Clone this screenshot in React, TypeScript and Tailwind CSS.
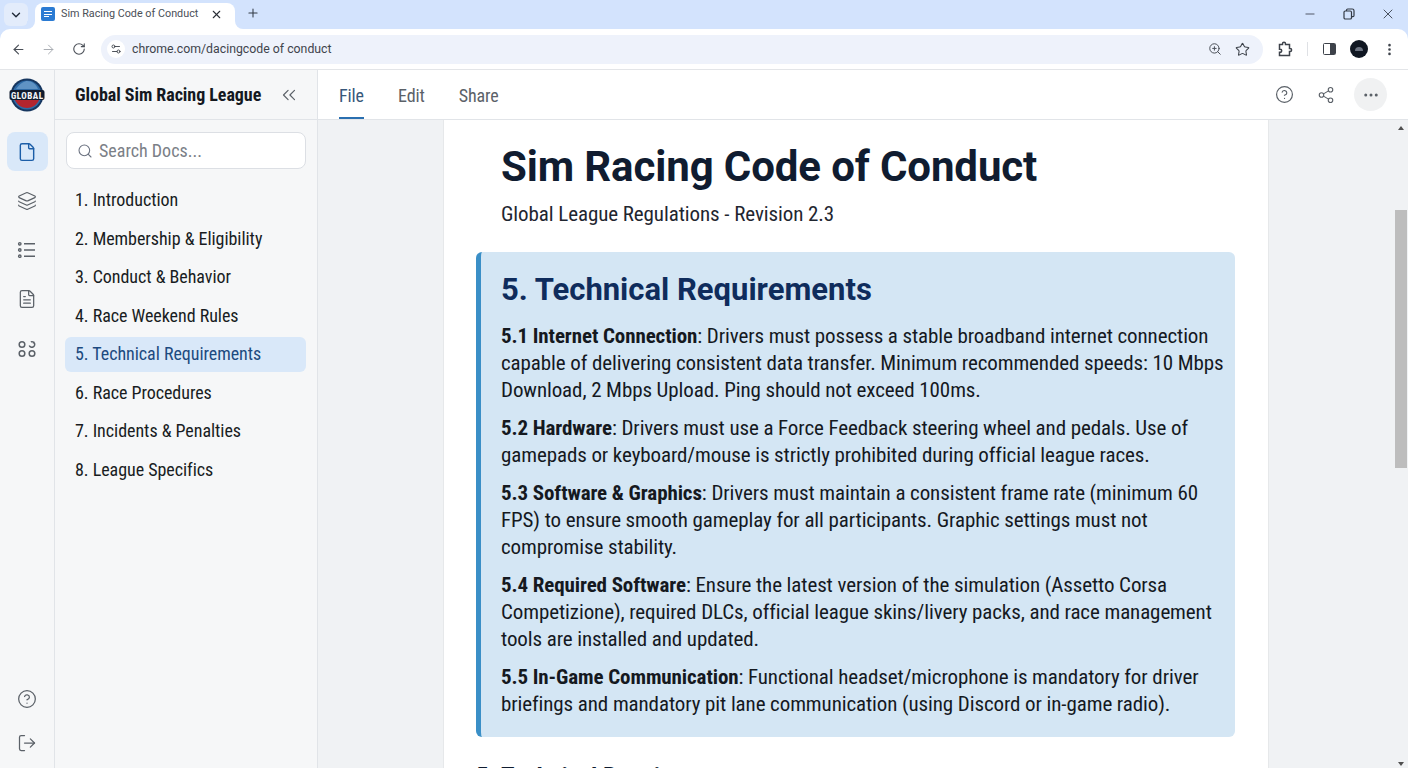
import React from 'react';
import {
  ArrowLeft,
  ArrowRight,
  ChevronDown,
  ChevronsLeft,
  CircleHelp,
  Ellipsis,
  EllipsisVertical,
  File,
  FileText,
  Layers,
  LogOut,
  Minus,
  Plus,
  RotateCw,
  Search,
  Settings2,
  Share2,
  Star,
  X,
  ZoomIn,
} from 'lucide-react';

const chapters = [
  '1. Introduction',
  '2. Membership & Eligibility',
  '3. Conduct & Behavior',
  '4. Race Weekend Rules',
  '5. Technical Requirements',
  '6. Race Procedures',
  '7. Incidents & Penalties',
  '8. League Specifics',
];

const sections = [
  {
    title: '5.1 Internet Connection',
    lines: [
      ': Drivers must possess a stable broadband internet connection',
      'capable of delivering consistent data transfer. Minimum recommended speeds: 10 Mbps',
      'Download, 2 Mbps Upload. Ping should not exceed 100ms.',
    ],
  },
  {
    title: '5.2 Hardware',
    lines: [
      ': Drivers must use a Force Feedback steering wheel and pedals. Use of',
      'gamepads or keyboard/mouse is strictly prohibited during official league races.',
    ],
  },
  {
    title: '5.3 Software & Graphics',
    lines: [
      ': Drivers must maintain a consistent frame rate (minimum 60',
      'FPS) to ensure smooth gameplay for all participants. Graphic settings must not',
      'compromise stability.',
    ],
  },
  {
    title: '5.4 Required Software',
    lines: [
      ': Ensure the latest version of the simulation (Assetto Corsa',
      'Competizione), required DLCs, official league skins/livery packs, and race management',
      'tools are installed and updated.',
    ],
  },
  {
    title: '5.5 In-Game Communication',
    lines: [
      ': Functional headset/microphone is mandatory for driver',
      'briefings and mandatory pit lane communication (using Discord or in-game radio).',
    ],
  },
];

function Logo() {
  return (
    <svg width="36" height="34" viewBox="0 0 36 34">
      <circle cx="18" cy="17" r="16.5" fill="#16365f" />
      <circle cx="18" cy="17" r="14.5" fill="#2d6aa6" />
      <path d="M7 11c4-6 9-8 11-8 5 0 9 3 11 8z" fill="#5f93c4" />
      <path d="M6 22h24c-2 5-7 8-12 8s-10-3-12-8z" fill="#b3252f" />
      <rect x="0.5" y="12" width="35" height="10" rx="2" fill="#111c2e" />
      <text x="18" y="20.500" textAnchor="middle" textLength="32" fontSize="9" fontWeight="800" fill="#f2f4f7" fontFamily="Roboto, sans-serif">
        GLOBAL
      </text>
    </svg>
  );
}

function AppsIcon() {
  return (
    <svg width="20" height="20" viewBox="0 0 20 20" fill="none" stroke="currentColor" strokeWidth="1.5" className="mt-[2px]">
      <circle cx="5" cy="5.500" r="2.800" />
      <path d="M12.300 6.500a2.800 2.800 0 1 0 1.500-3.600M16.500 4.500l.2-2" />
      <circle cx="5" cy="14.500" r="2.800" />
      <circle cx="15" cy="14.500" r="2.800" />
    </svg>
  );
}

function ListIcon() {
  return (
    <svg width="20" height="20" viewBox="0 0 20 20" fill="none" stroke="currentColor" strokeWidth="1.400">
      <circle cx="2.800" cy="3.800" r="1.200" />
      <circle cx="2.800" cy="10" r="1.200" />
      <circle cx="2.800" cy="16.200" r="1.200" />
      <path d="M7 3.800h11M7 10h11M7 16.200h11" />
    </svg>
  );
}

function TabBar() {
  return (
    <div className="flex h-[29px] items-end bg-[#d3e3fd] pl-1">
      <div className="mb-[3px] flex h-[23px] w-6 items-center justify-center rounded-md bg-[#e3ecfb] text-[#1f2937]">
        <ChevronDown size={14} strokeWidth={2.400} />
      </div>
      <div className="relative ml-[7px] flex h-[26px] w-[200px] items-center rounded-t-lg bg-white pb-[4px] pl-[6px] pr-3">
        {/* concave corners where the tab meets the toolbar */}
        <span className="absolute bottom-0 -left-[8px] h-2 w-2 bg-white">
          <span className="block h-full w-full rounded-br-lg bg-[#d3e3fd]" />
        </span>
        <span className="absolute bottom-0 -right-[8px] h-2 w-2 bg-white">
          <span className="block h-full w-full rounded-bl-lg bg-[#d3e3fd]" />
        </span>
        <div className="flex h-[14px] w-[14px] flex-col justify-center gap-[1.500px] rounded-[2px] bg-[#2b7bd3] px-[3px]">
          <span className="h-px w-full bg-white" />
          <span className="h-px w-full bg-white" />
          <span className="h-px w-[5px] bg-white" />
        </div>
        <span className="ml-[6px] text-[10.800px] text-[#4a4f57] [font-stretch:100%]">Sim Racing Code of Conduct</span>
        <X size={13} strokeWidth={2} className="ml-auto text-[#2b2f36]" />
      </div>
      <Plus size={14} strokeWidth={1.800} className="mb-[9px] ml-[11px] text-[#333a45]" />
      <div className="mb-[7px] ml-auto flex w-[105px] items-center justify-between pr-[12px] text-[#333a45]">
        <Minus size={14} strokeWidth={1.400} />
        <svg width="12" height="12" viewBox="0 0 12 12" fill="none" stroke="currentColor" strokeWidth="1.200">
          <rect x="1" y="3" width="7.500" height="8" rx="1.300" />
          <path d="M3.500 3V2.200C3.500 1.500 4 1 4.700 1h4.600C10.300 1 11 1.700 11 2.700v4.800c0 .7-.5 1.100-1.100 1.100h-1.400" />
        </svg>
        <X size={16} strokeWidth={1.300} />
      </div>
    </div>
  );
}

function ToolBar() {
  return (
    <div className="bg-[#d3e3fd]">
      <div className="flex h-[41px] items-center rounded-t-[10px] border-b border-[#e3e5e8] bg-white px-[11px]">
        <ArrowLeft size={15} strokeWidth={1.800} className="text-[#4a4f57]" />
        <ArrowRight size={15} strokeWidth={1.600} className="ml-[15px] text-[#a9adb3]" />
        <RotateCw size={14} strokeWidth={1.900} className="ml-[16px] text-[#4a4f57]" />
        <div className="ml-[15px] flex h-[29px] w-[1162px] items-center rounded-full bg-[#eef2fb] pl-[6px] pr-[13px]">
          <div className="flex h-[18px] w-[18px] items-center justify-center rounded-full bg-white text-[#3d424a]">
            <Settings2 size={12} strokeWidth={1.800} />
          </div>
          <span className="ml-[7px] pt-px text-[12.300px] text-[#3f444c] [font-stretch:100%]">chrome.com/dacingcode of conduct</span>
          <ZoomIn size={14} strokeWidth={1.700} className="ml-auto text-[#4a4f57]" />
          <Star size={15} strokeWidth={1.700} className="ml-[13px] text-[#3d424a]" />
        </div>
        <svg width="16" height="16" viewBox="0 0 16 16" fill="none" stroke="#3d424a" strokeWidth="1.500" className="ml-[14px]">
          <path d="M5.500 3.500V2.800a1.500 1.500 0 0 1 3 0v.7h4v4h.6a1.500 1.500 0 0 1 0 3h-.6v4H2.500v-3.200h.7a1.500 1.500 0 0 0 0-3h-.7V3.500z" />
        </svg>
        <span className="ml-[14px] h-[14px] w-px bg-[#dfe1e5]" />
        <div className="ml-[15px] flex h-[12px] w-[13px] rounded-[1.500px] border-[1.500px] border-[#3d424a]">
          <span className="ml-auto h-full w-[5px] bg-[#3d424a]" />
        </div>
        <div className="ml-[14px] flex h-[18px] w-[18px] items-center justify-center rounded-full bg-[#101722]">
          <span className="h-[4px] w-[8px] rounded-t-full bg-[#6b7280]" />
        </div>
        <EllipsisVertical size={15} strokeWidth={2.200} className="ml-[14px] text-[#3d424a]" />
      </div>
    </div>
  );
}

function IconRail() {
  return (
    <aside className="flex w-[55px] shrink-0 flex-col items-center border-r border-[#e1e4e8] bg-[#f6f7f8] pb-[15px]">
      <div className="flex h-[50px] items-center justify-center">
        <Logo />
      </div>
      <nav className="mt-3 flex flex-col items-center gap-[10px] text-[#5b6168]">
        <div className="flex h-[39px] w-[41px] items-center justify-center rounded-lg bg-[#d9e8f9] text-[#1c5ea8]">
          <File size={20} strokeWidth={1.700} />
        </div>
        <div className="flex h-[39px] w-[41px] items-center justify-center">
          <Layers size={20} strokeWidth={1.400} />
        </div>
        <div className="flex h-[39px] w-[41px] items-center justify-center">
          <ListIcon />
        </div>
        <div className="flex h-[39px] w-[41px] items-center justify-center">
          <FileText size={20} strokeWidth={1.500} />
        </div>
        <div className="flex h-[39px] w-[41px] items-center justify-center">
          <AppsIcon />
        </div>
      </nav>
      <div className="mt-auto flex flex-col items-center gap-[24px] text-[#5b6168]">
        <CircleHelp size={20} strokeWidth={1.500} />
        <LogOut size={20} strokeWidth={1.500} />
      </div>
    </aside>
  );
}

function Sidebar() {
  return (
    <aside className="flex w-[263px] shrink-0 flex-col border-r border-[#e1e4e8] bg-[#f6f7f8]">
      <div className="flex h-[50px] shrink-0 items-center justify-between border-b border-[#e1e4e8] pl-5 pr-[17px]">
        <span className="text-[18px] font-bold tracking-[-0.05px] text-[#14181f]">Global Sim Racing League</span>
        <ChevronsLeft size={22} strokeWidth={1.300} className="text-[#5b6168]" />
      </div>
      <div className="mx-[11px] mt-3 flex h-[37px] w-[240px] items-center rounded-lg border border-[#dcdfe4] bg-white pl-[10px]">
        <Search size={16} strokeWidth={1.600} className="text-[#6b7280]" />
        <span className="ml-[6px] text-[18px] text-[#7b8087]">Search Docs...</span>
      </div>
      <ul className="mx-[10px] mt-[14px]">
        {chapters.map((chapter) => (
          <li
            key={chapter}
            className={
              chapter.startsWith('5.')
                ? 'mb-[3.500px] flex h-[35px] w-[241px] items-center rounded-md bg-[#d9e8f9] pb-[2px] pl-[10px] text-[18px] tracking-[-0.04px] text-[#1c4a80]'
                : 'mb-[3.500px] flex h-[35px] w-[241px] items-center pb-[2px] pl-[10px] text-[18px] tracking-[-0.04px] text-[#181c22]'
            }
          >
            {chapter}
          </li>
        ))}
      </ul>
    </aside>
  );
}

function DocHeader() {
  return (
    <header className="flex h-[50px] shrink-0 items-stretch border-b border-[#e1e4e8] bg-white px-[21px]">
      <nav className="flex gap-[34px] text-[18px] tracking-[-0.1px] text-[#5b6168]">
        <span className="flex items-center border-b-2 border-[#2a6fb0] pt-[4px] text-[#37577a]">File</span>
        <span className="flex items-center border-b-2 border-transparent pt-[4px]">Edit</span>
        <span className="flex items-center border-b-2 border-transparent pt-[4px]">Share</span>
      </nav>
      <div className="ml-auto flex items-center text-[#5b6168]">
        <CircleHelp size={19} strokeWidth={1.500} />
        <Share2 size={18} strokeWidth={1.500} className="ml-[23px]" />
        <div className="ml-[19px] flex h-[33px] w-[33px] items-center justify-center rounded-full bg-[#f0f1f2]">
          <Ellipsis size={18} strokeWidth={2} />
        </div>
      </div>
    </header>
  );
}

function Scrollbar() {
  return (
    <div className="flex w-[14px] shrink-0 flex-col bg-[#f0f2f4]">
      <div className="flex h-[90px] justify-center pt-[6px]">
        <span className="h-0 w-0 border-x-[3px] border-b-[4px] border-x-transparent border-b-[#505050]" />
      </div>
      <div className="ml-[1px] h-[258px] w-[12px] bg-[#bdbdbd]" />
      <div className="mt-auto flex justify-center pb-[2px]">
        <span className="h-0 w-0 border-x-[3px] border-t-[4px] border-x-transparent border-t-[#505050]" />
      </div>
    </div>
  );
}

function DocPage() {
  return (
    <div className="mx-auto h-full w-[826px] overflow-hidden border-x border-[#e6e8ea] bg-white pl-[32px] pr-[33px]">
      <h1 className="mt-[17px] pl-[25px] text-[42px] leading-[60px] font-bold tracking-[-0.12px] text-[#101c30] [font-stretch:100%]">
        Sim Racing Code of Conduct
      </h1>
      <p className="mt-[3px] pl-[25px] text-[21px] leading-[28px] tracking-[-0.08px] text-[#1f2630]">
        Global League Regulations - Revision 2.3
      </p>
      <section className="mt-[24px] h-[485px] rounded-md border-l-[5px] border-[#3a8fc7] bg-[#d4e6f4] pl-[20px] pt-[17px]">
        <h2 className="text-[31px] leading-[42px] font-bold text-[#0f2c5c] [font-stretch:100%]">5. Technical Requirements</h2>
        <div className="mt-[12px] flex flex-col gap-[11px] text-[21px] leading-[27px] tracking-[-0.1px] text-[#15191f]">
          {sections.map((section) => (
            <p key={section.title} className="whitespace-nowrap">
              <strong className="font-bold">{section.title}</strong>
              {section.lines.map((line, i) => (
                <React.Fragment key={i}>
                  {i > 0 && <br />}
                  {line}
                </React.Fragment>
              ))}
            </p>
          ))}
        </div>
      </section>
      <h2 className="mt-[25px] text-[25px] leading-[32px] font-bold text-[#101c30]">5. Technical Requirements</h2>
    </div>
  );
}

export default function App() {
  return (
    <div className="flex h-screen flex-col overflow-hidden bg-white font-['Roboto',sans-serif] [font-stretch:85%]">
      <TabBar />
      <ToolBar />
      <div className="flex min-h-0 flex-1">
        <IconRail />
        <Sidebar />
        <main className="flex min-w-0 flex-1 flex-col">
          <DocHeader />
          <div className="flex min-h-0 flex-1 bg-[#f0f2f4]">
            <div className="min-w-0 flex-1">
              <DocPage />
            </div>
            <Scrollbar />
          </div>
        </main>
      </div>
    </div>
  );
}
